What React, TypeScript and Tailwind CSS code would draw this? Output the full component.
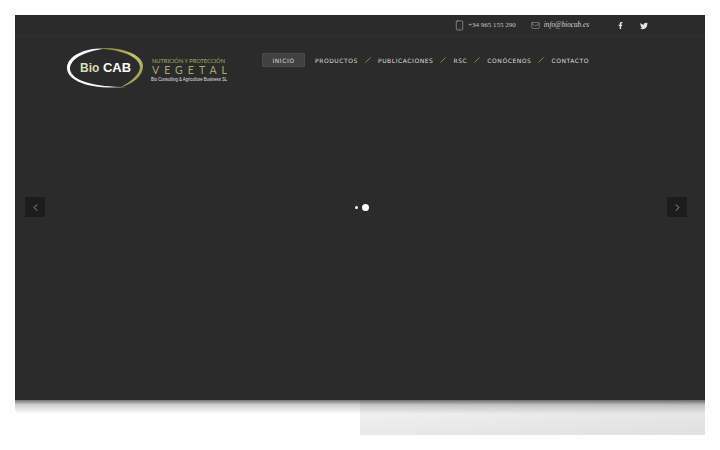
import { Smartphone, Mail, ChevronLeft, ChevronRight } from "lucide-react";
import { FaFacebookF, FaTwitter } from "react-icons/fa";

const items = ["PRODUCTOS", "PUBLICACIONES", "RSC", "CONÓCENOS", "CONTACTO"];

function Logo() {
  return (
    <svg width="180" height="44" viewBox="0 0 180 44" className="block shrink-0">
      <defs>
        <linearGradient id="wh" x1="0" y1="0" x2="1" y2="0">
          <stop offset="0" stopColor="#ffffff" />
          <stop offset="0.7" stopColor="#f0f0f0" />
          <stop offset="1" stopColor="#8a8a7a" />
        </linearGradient>
        <linearGradient id="gr" x1="0" y1="0" x2="1" y2="1">
          <stop offset="0" stopColor="#6f7038" />
          <stop offset="0.5" stopColor="#c3c56a" />
          <stop offset="1" stopColor="#8f9148" />
        </linearGradient>
      </defs>
      <path d="M44 2.5 C20 1 2 10 2 22 C2 34 22 44 62 41 C30 41 6 35 5 23 C5 12 22 4 44 2.5 Z" fill="url(#wh)" />
      <path d="M30 2.5 C55 0 78 8 78 20 C78 30 68 38 55 41.5 C66 36 75 28 75 21 C74 10 55 3 30 2.5 Z" fill="url(#gr)" />
      <text x="15" y="26" fontFamily="'Liberation Sans', sans-serif" fontSize="12" fill="#dcdcb4" fontWeight="700">Bio</text>
      <text x="38" y="26" fontFamily="'Liberation Sans', sans-serif" fontSize="13" fill="#ffffff" fontWeight="700" textLength="28" lengthAdjust="spacingAndGlyphs">CAB</text>
      <text x="87" y="17" fontFamily="'Lato', sans-serif" fontSize="5.6" fill="#a9aa68" textLength="73" lengthAdjust="spacingAndGlyphs">NUTRICIÓN Y PROTECCIÓN</text>
      <text x="87" y="28" fontFamily="'Lato', sans-serif" fontSize="10.5" fill="#a9aa68" textLength="75">VEGETAL</text>
      <text x="86" y="34.5" fontFamily="'Liberation Sans', sans-serif" fontSize="4.8" fill="#e0e0e0" textLength="76" lengthAdjust="spacingAndGlyphs">Bio Consulting &amp; Agriculture Business SL</text>
    </svg>
  );
}

export default function App() {
  return (
    <div className="w-[720px] h-[450px] bg-white overflow-hidden pt-[15px] px-[15px]">
      <div className="relative w-[690px] h-[385px] bg-[#2b2b2b] flex flex-col z-10">
        <div className="h-[22px] flex items-center justify-end border-b border-[#303030] pr-[57px] text-[#cfcfcf]">
          <Smartphone size={11} strokeWidth={1.1} className="mr-[3px]" />
          <span className="text-[7px] mr-[15px] text-[#c4c4c4] [font-family:'Liberation_Serif',serif]">+34 965 155 290</span>
          <Mail size={9} strokeWidth={1.1} className="mr-[4px]" />
          <span className="text-[7.2px] italic text-[#d4d4d4] [font-family:'Liberation_Serif',serif]">info@biocab.es</span>
          <FaFacebookF size={7} className="ml-[28px] text-[#e6e6e6]" />
          <FaTwitter size={8} className="ml-[16px] text-[#e6e6e6]" />
        </div>
        <div className="flex items-start pl-[50px] pt-[9px]">
          <Logo />
          <nav className="ml-[17px] mt-[7px] flex items-center text-[6px] tracking-[0.56px] text-[#dedede] [font-family:'DejaVu_Sans',sans-serif]">
            <span className="w-[43px] h-[14px] flex items-center justify-center bg-[#414141] border border-[#4a4a4a] mr-[10px]">INICIO</span>
            {items.map((t, i) => (
              <span key={t} className="flex items-center">
                {i > 0 && (
                  <svg width="6" height="6" viewBox="0 0 6 6" className="mx-[7px]">
                    <path d="M0.5 5.5 L5.5 0.5" stroke="#9a9c50" strokeWidth="0.8" />
                  </svg>
                )}
                {t}
              </span>
            ))}
          </nav>
        </div>
        <button className="absolute left-[10px] top-[182px] w-[20px] h-[20px] bg-[#1c1c1c] flex items-center justify-center text-[#efefef]">
          <ChevronLeft size={11} strokeWidth={1.3} />
        </button>
        <button className="absolute right-[18px] top-[182px] w-[20px] h-[20px] bg-[#1c1c1c] flex items-center justify-center text-[#efefef]">
          <ChevronRight size={11} strokeWidth={1.3} />
        </button>
        <div className="absolute left-[340px] top-[189px] flex items-center gap-[4px]">
          <span className="w-[3px] h-[3px] rounded-full bg-white" />
          <span className="w-[7px] h-[7px] rounded-full bg-white" />
        </div>
        <div className="absolute left-0 right-0 top-full h-[14px] rounded-b-[6px] bg-gradient-to-b from-black/55 via-black/18 via-35% to-transparent" />
      </div>
      <div className="ml-[345px] w-[345px] h-[35px] bg-gradient-to-br from-[#f3f3f3] to-[#e0e0e0]" />
    </div>
  );
}
